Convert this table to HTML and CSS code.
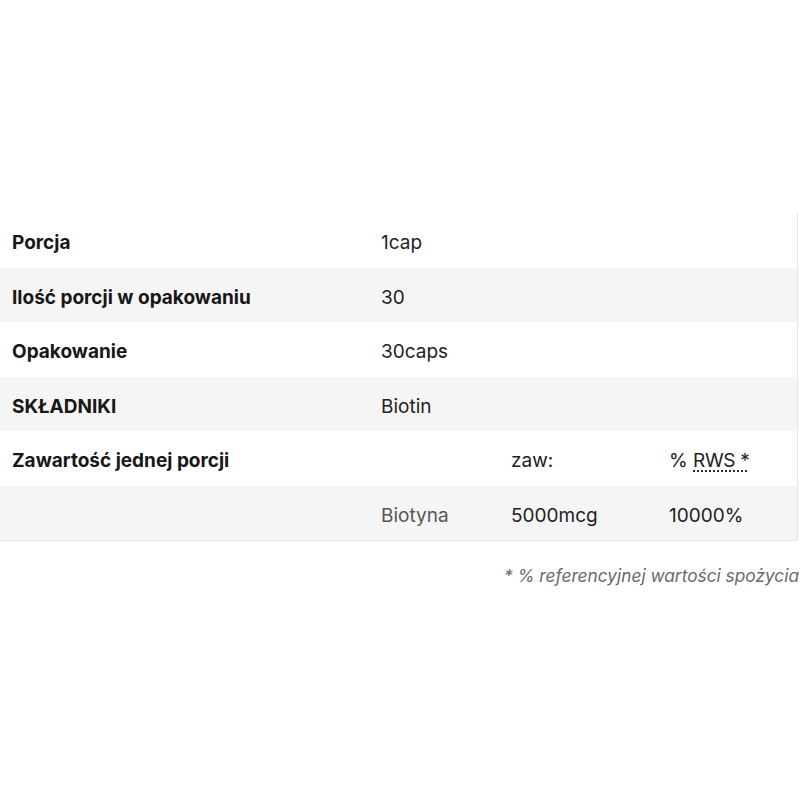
FILE: index.html
```html
<!DOCTYPE html>
<html lang="pl">
<head>
<meta charset="utf-8">
<link rel="stylesheet" href="styles.css">
</head>
<body>
<div class="page">
  <div class="table">
    <div class="row">
      <div class="cell label">Porcja</div>
      <div class="cell value span3">1cap</div>
    </div>
    <div class="row alt">
      <div class="cell label">Ilość porcji w opakowaniu</div>
      <div class="cell value span3">30</div>
    </div>
    <div class="row">
      <div class="cell label">Opakowanie</div>
      <div class="cell value span3">30caps</div>
    </div>
    <div class="row alt">
      <div class="cell label">SKŁADNIKI</div>
      <div class="cell value span3">Biotin</div>
    </div>
    <div class="row">
      <div class="cell label">Zawartość jednej porcji</div>
      <div class="cell value"></div>
      <div class="cell value">zaw:</div>
      <div class="cell value">% <abbr class="rws">RWS *</abbr></div>
    </div>
    <div class="row alt last">
      <div class="cell label"></div>
      <div class="cell value muted">Biotyna</div>
      <div class="cell value">5000mcg</div>
      <div class="cell value">10000%</div>
    </div>
  </div>
  <p class="note">* % referencyjnej wartości spożycia</p>
</div>
</body>
</html>
```

FILE: styles.css
```css
html, body {
  margin: 0;
  padding: 0;
  background: #ffffff;
}
body {
  font-family: Inter, "Liberation Sans", Arial, sans-serif;
  color: #1f1f1f;
}
.page {
  padding-top: 213px;
  width: 800px;
}
.table {
  width: 797px;
  border-right: 1px solid #e6e6e6;
  border-bottom: 1px solid #e6e6e6;
}
.row {
  display: grid;
  grid-template-columns: 369px 130px 158px 1fr;
  height: 54.5px;
  align-items: center;
  background: #ffffff;
}
.row.alt {
  background: #f5f5f5;
}
.cell {
  padding: 6px 12px 0 12px;
  font-size: 19px;
  line-height: 22px;
}
.label {
  font-weight: 700;
  color: #171717;
}
.value {
  font-weight: 400;
  color: #222222;
}
.span3 {
  grid-column: 2 / 5;
}
.muted {
  color: #555555;
}
.rws {
  text-decoration: underline dotted;
  text-underline-offset: 3px;
  letter-spacing: -0.3px;
}
.note {
  margin: 24px 0 0 0;
  width: 799px;
  text-align: right;
  font-style: italic;
  font-size: 17.3px;
  color: #6a6a6a;
}
```
